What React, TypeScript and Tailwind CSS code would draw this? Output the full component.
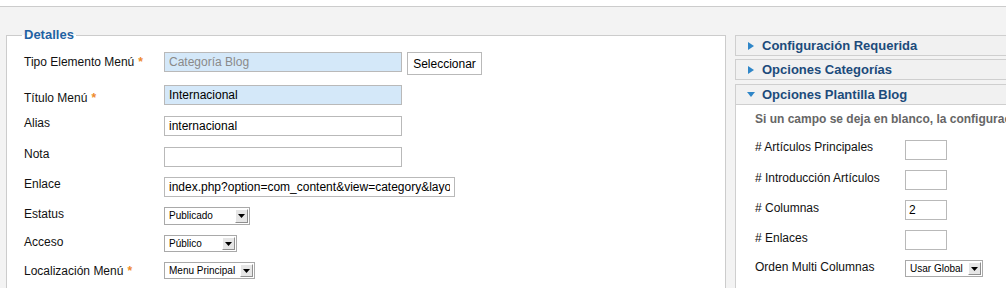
import React from 'react';

const Star = () => <span className="ml-[4px] text-[#ee8a2b] font-bold">*</span>;

const Row: React.FC<{ label: string; req?: boolean; h: string; pt?: string; children: React.ReactNode }> = ({
  label,
  req,
  h,
  pt = '',
  children,
}) => (
  <div className={`flex items-start ${h}`}>
    <div className={`w-[140px] shrink-0 leading-[14px] text-[12px] text-[#111] ${pt}`}>
      {label}
      {req && <Star />}
    </div>
    {children}
  </div>
);

const Select: React.FC<{ value: string; w: string; h?: string }> = ({ value, w, h = 'h-[18px]' }) => (
  <div className={`flex items-stretch border border-[#a9a9a9] bg-white ${w} ${h}`}>
    <span className="flex-1 pl-[4px] text-[10px] leading-[15px] text-black whitespace-nowrap overflow-hidden">{value}</span>
    <span className="my-[1px] mr-[1px] w-[13px] flex items-center justify-center bg-[#e6e6e6] border border-t-white border-l-white border-r-[#8f8f8f] border-b-[#8f8f8f]">
      <svg width="7" height="4" viewBox="0 0 7 4">
        <polygon points="0,0 7,0 3.5,4" fill="#000" />
      </svg>
    </span>
  </div>
);

const inputBase = 'h-[20px] border border-[#b9b9b9] px-[4px] text-[12px] outline-none';

const PanelHead: React.FC<{ title: string; open?: boolean; mb?: string }> = ({ title, open, mb = '' }) => (
  <div className={`flex items-center h-[21px] border border-[#cfcfcf] bg-[#f1f1f1] pl-[11px] ${mb}`}>
    <span className="w-[8px] flex justify-center">
      {open ? (
        <svg width="8" height="5" viewBox="0 0 8 5">
          <polygon points="0,0 8,0 4,5" fill="#2f86c8" />
        </svg>
      ) : (
        <svg width="6" height="8" viewBox="0 0 6 8">
          <polygon points="0,0 6,4 0,8" fill="#2f86c8" />
        </svg>
      )}
    </span>
    <span className="ml-[7px] text-[13px] font-bold text-[#1c4b7b] whitespace-nowrap">{title}</span>
  </div>
);

const SmallRow: React.FC<{ label: string; children: React.ReactNode; pt?: string }> = ({ label, children, pt = 'pt-0' }) => (
  <div className="flex items-start h-[30px]">
    <div className={`w-[150px] shrink-0 text-[12px] leading-[14px] text-[#111] ${pt}`}>{label}</div>
    {children}
  </div>
);

const smallInput = 'h-[20px] w-[42px] border border-[#b9b9b9] bg-white px-[3px] text-[12px] text-black outline-none';

export default function App() {
  return (
    <div
      className="w-[1006px] h-[288px] overflow-hidden bg-[#f3f3f3]"
      style={{ fontFamily: '"Liberation Sans", Arial, sans-serif' }}
    >
      <div className="h-[7px] bg-white border-b border-[#cccccc]" />
      <div className="flex items-start pl-[6px]">
        <fieldset className="mt-[20px] w-[720px] h-[320px] shrink-0 border border-[#cccccc] bg-white pl-[17px] pt-[9px]">
          <legend className="-ml-[2px] px-[2px] text-[13px] leading-[16px] font-bold text-[#1f62a3]">Detalles</legend>

          <Row label="Tipo Elemento Menú" req h="h-[33px]" pt="pt-[3px]">
            <input readOnly value="Categoría Blog" className={`${inputBase} w-[238px] bg-[#d4e8f9] text-[#8a8a8a]`} />
            <button className="ml-[5px] h-[23px] w-[75px] border border-[#b9b9b9] bg-white text-[12px] text-black">
              Seleccionar
            </button>
          </Row>
          <Row label="Título Menú" req h="h-[31px]" pt="pt-[6px]">
            <input readOnly value="Internacional" className={`${inputBase} w-[238px] bg-[#d4e8f9] text-black`} />
          </Row>
          <Row label="Alias" h="h-[31px]">
            <input readOnly value="internacional" className={`${inputBase} w-[238px] bg-white text-black`} />
          </Row>
          <Row label="Nota" h="h-[30px]">
            <input readOnly value="" className={`${inputBase} w-[238px] bg-white text-black`} />
          </Row>
          <Row label="Enlace" h="h-[30px]">
            <input
              readOnly
              value="index.php?option=com_content&view=category&layout=blog&id=9"
              className={`${inputBase} w-[291px] bg-white text-black`}
            />
          </Row>
          <Row label="Estatus" h="h-[28px]">
            <Select value="Publicado" w="w-[86px]" />
          </Row>
          <Row label="Acceso" h="h-[27px]">
            <Select value="Público" w="w-[73px]" h="h-[17px]" />
          </Row>
          <Row label="Localización Menú" req h="h-[27px]" pt="pt-[2px]">
            <Select value="Menu Principal" w="w-[91px]" h="h-[17px]" />
          </Row>
        </fieldset>

        <div className="ml-[9px] mt-[28px] w-[300px] shrink-0">
          <PanelHead title="Configuración Requerida" mb="mb-[3px]" />
          <PanelHead title="Opciones Categorías" mb="mb-[4px]" />
          <PanelHead title="Opciones Plantilla Blog" open />
          <div className="h-[200px] border-x border-[#cfcfcf] bg-white pl-[19px] pt-[7px]">
            <div className="text-[12px] leading-[14px] font-bold text-[#666] whitespace-nowrap">
              Si un campo se deja en blanco, la configuración global será usada.
            </div>
            <div className="mt-[14px]">
              <SmallRow label="# Artículos Principales">
                <input readOnly value="" className={smallInput} />
              </SmallRow>
              <SmallRow label="# Introducción Artículos" pt="pt-[1px]">
                <input readOnly value="" className={smallInput} />
              </SmallRow>
              <SmallRow label="# Columnas" pt="pt-[1px]">
                <input readOnly value="2" className={smallInput} />
              </SmallRow>
              <SmallRow label="# Enlaces" pt="pt-[1px]">
                <input readOnly value="" className={smallInput} />
              </SmallRow>
              <SmallRow label="Orden Multi Columnas">
                <Select value="Usar Global" w="w-[78px]" h="h-[17px]" />
              </SmallRow>
            </div>
          </div>
        </div>
      </div>
    </div>
  );
}
